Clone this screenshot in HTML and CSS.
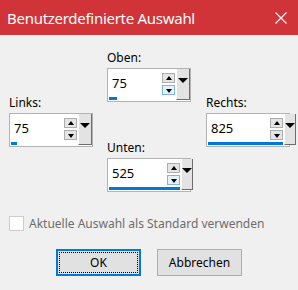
FILE: index.html
```html
<!DOCTYPE html>
<html lang="de">
<head>
  <meta charset="UTF-8" />
  <meta name="viewport" content="width=device-width, initial-scale=1.0"/>
  <title>Benutzerdefinierte Auswahl</title>
  <link rel="stylesheet" href="styles.css">
</head>
<body>
  <div class="titlebar">
    <span class="title">Benutzerdefinierte Auswahl</span>
    <svg class="close" width="12" height="12" viewBox="0 0 12 12">
      <path d="M0.5 0.5 L11.5 11.5 M11.5 0.5 L0.5 11.5" stroke="#fff" stroke-width="1.1" fill="none"/>
    </svg>
  </div>

  <div class="fields">
    <div class="col side">
      <div class="group">
        <label>Links:</label>
        <div class="spin">
          <div class="spin-main">
            <div class="spin-row">
              <span class="spin-value">75</span>
              <div class="spin-arrows">
                <button class="arrow up"></button>
                <button class="arrow down"></button>
              </div>
            </div>
            <div class="spin-track"><div class="spin-bar" style="width: 6px"></div></div>
          </div>
          <div class="spin-drop"></div>
        </div>
      </div>
    </div>

    <div class="col middle">
      <div class="group">
        <label>Oben:</label>
        <div class="spin">
          <div class="spin-main">
            <div class="spin-row">
              <span class="spin-value">75</span>
              <div class="spin-arrows">
                <button class="arrow up"></button>
                <button class="arrow down hot"></button>
              </div>
            </div>
            <div class="spin-track"><div class="spin-bar" style="width: 8px"></div></div>
          </div>
          <div class="spin-drop"></div>
        </div>
      </div>
      <div class="group">
        <label>Unten:</label>
        <div class="spin">
          <div class="spin-main">
            <div class="spin-row">
              <span class="spin-value">525</span>
              <div class="spin-arrows">
                <button class="arrow up"></button>
                <button class="arrow down hot"></button>
              </div>
            </div>
            <div class="spin-track"><div class="spin-bar" style="width: 71px"></div></div>
          </div>
          <div class="spin-drop"></div>
        </div>
      </div>
    </div>

    <div class="col side">
      <div class="group">
        <label>Rechts:</label>
        <div class="spin">
          <div class="spin-main">
            <div class="spin-row">
              <span class="spin-value">825</span>
              <div class="spin-arrows">
                <button class="arrow up"></button>
                <button class="arrow down"></button>
              </div>
            </div>
            <div class="spin-track"><div class="spin-bar" style="width: 75px"></div></div>
          </div>
          <div class="spin-drop"></div>
        </div>
      </div>
    </div>
  </div>

  <div class="check-row">
    <span class="checkbox"></span>
    <span class="check-label">Aktuelle Auswahl als Standard verwenden</span>
  </div>

  <div class="buttons">
    <button class="btn default"><span class="focus">OK</span></button>
    <button class="btn">Abbrechen</button>
  </div>
</body>
</html>
```

FILE: styles.css
```css
body {
  margin: 0;
  font-family: 'Noto Sans', 'Open Sans', sans-serif;
  font-size: 12px;
  background: #f0f0f0;
  color: #000;
}

.titlebar {
  height: 35px;
  background: #d13438;
  display: flex;
  align-items: center;
  justify-content: space-between;
  padding: 0 11px 0 7px;
}

.title {
  color: #fff;
  font-size: 15px;
  letter-spacing: -0.28px;
}

.close {
  display: block;
}

.fields {
  display: grid;
  grid-template-columns: 98px 99px 84px;
  padding: 15px 0 0 9px;
}

.col {
  display: flex;
  flex-direction: column;
}

.side {
  justify-content: center;
}

.middle {
  gap: 38px;
}

.group label {
  display: block;
  line-height: 16px;
  margin-bottom: 2px;
  color: #000;
}

.spin {
  display: flex;
  width: 82px;
  height: 32px;
  border: 1px solid #b3b3b3;
  background: #fff;
}

.spin-main {
  flex: 1;
  display: flex;
  flex-direction: column;
}

.spin-row {
  flex: 1;
  display: flex;
  align-items: center;
  padding-left: 4px;
}

.spin-value {
  flex: 1;
  font-size: 13px;
  color: #000;
}

.spin-arrows {
  display: flex;
  flex-direction: column;
  gap: 2px;
  margin-top: 2px;
}

.arrow {
  width: 13px;
  height: 10px;
  padding: 0;
  border: 1px solid #adadad;
  background: #e5e5e5;
  position: relative;
}

.arrow::after {
  content: "";
  position: absolute;
  left: 3px;
  border-left: 3px solid transparent;
  border-right: 3px solid transparent;
}

.arrow.up::after {
  top: 2px;
  border-bottom: 4px solid #000;
}

.arrow.down::after {
  top: 3px;
  border-top: 4px solid #000;
}

.arrow.hot {
  border-color: #7eb4ea;
  background: #e5f1fb;
}

.spin-track {
  height: 3px;
  margin: 0 0 1px 1px;
}

.spin-bar {
  height: 3px;
  background: #0078d7;
}

.spin-drop {
  width: 14px;
  background: #e3e3e3;
  border-left: 1px solid #fff;
  border-right: 1px solid #6d6d6d;
  border-bottom: 1px solid #6d6d6d;
  margin: 0 0 1px 1px;
  display: flex;
  justify-content: center;
  padding-top: 9px;
  box-sizing: border-box;
}

.spin-drop::after {
  content: "";
  width: 0;
  height: 0;
  border-left: 5px solid transparent;
  border-right: 5px solid transparent;
  border-top: 5px solid #000;
}

.check-row {
  display: flex;
  align-items: center;
  gap: 5px;
  padding: 23px 0 0 9px;
}

.checkbox {
  width: 13px;
  height: 13px;
  border: 1px solid #cccccc;
  background: #fff;
}

.check-label {
  color: #6d6d6d;
  font-size: 12px;
}

.buttons {
  display: flex;
  gap: 16px;
  padding: 17px 0 0 56px;
}

.btn {
  width: 85px;
  height: 27px;
  font-family: inherit;
  font-size: 12px;
  color: #000;
  background: #e1e1e1;
  border: 1px solid #adadad;
  padding: 0;
}

.btn.default {
  border: 2px solid #0078d7;
  padding: 1px;
}

.btn .focus {
  display: flex;
  align-items: center;
  justify-content: center;
  height: 100%;
  border: 1px dotted #000;
  box-sizing: border-box;
}
```
